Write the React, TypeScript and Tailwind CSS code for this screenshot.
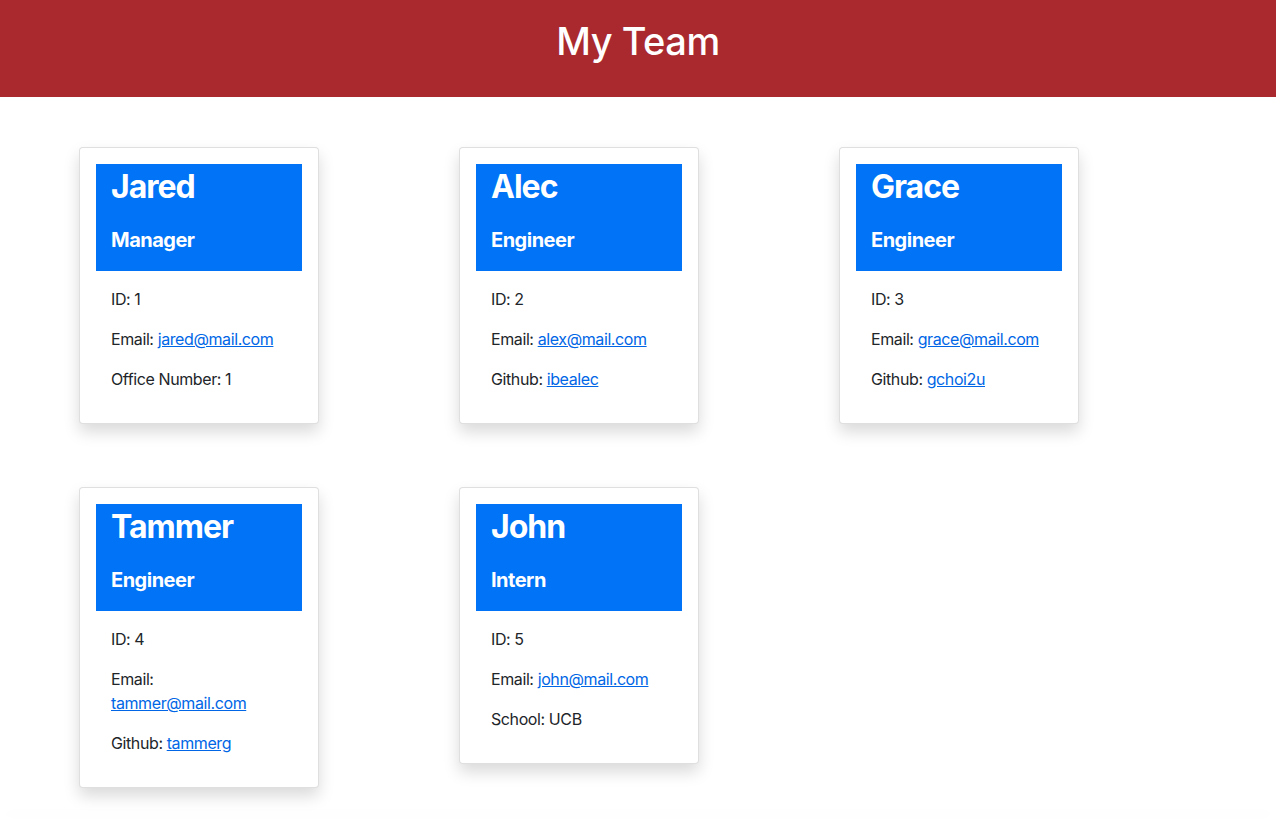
import React from "react";

type Member = {
  name: string;
  role: string;
  id: number;
  email: string;
  extra: { label: string; value: string; link?: boolean };
};

const team: Member[] = [
  { name: "Jared", role: "Manager", id: 1, email: "jared@mail.com", extra: { label: "Office Number", value: "1" } },
  { name: "Alec", role: "Engineer", id: 2, email: "alex@mail.com", extra: { label: "Github", value: "ibealec", link: true } },
  { name: "Grace", role: "Engineer", id: 3, email: "grace@mail.com", extra: { label: "Github", value: "gchoi2u", link: true } },
  { name: "Tammer", role: "Engineer", id: 4, email: "tammer@mail.com", extra: { label: "Github", value: "tammerg", link: true } },
  { name: "John", role: "Intern", id: 5, email: "john@mail.com", extra: { label: "School", value: "UCB" } },
];

function MemberCard({ m }: { m: Member }) {
  return (
    <div className="ml-[11px] w-[240px] self-start rounded-[4px] border border-[rgba(0,0,0,0.125)] bg-white p-4 shadow-[0_8px_16px_rgba(0,0,0,0.15)]">
      <div className="bg-[#0073f7] px-[15px] pb-[19px] pt-[4px] text-white">
        <h2 className="text-[32px] font-bold leading-[38px] tracking-[-1px]">{m.name}</h2>
        <h4 className="mt-[22px] text-[20px] font-bold leading-[24px] tracking-[-0.5px]">{m.role}</h4>
      </div>
      <div className="px-[15px] pt-4 text-[16px] leading-6 tracking-[-0.4px] text-[#212529]">
        <p className="mb-4">ID: {m.id}</p>
        <p className="mb-4">
          Email:{" "}
          <a href="#" className="text-[#0066e6] underline">
            {m.email}
          </a>
        </p>
        <p className="mb-4">
          {m.extra.label}:{" "}
          {m.extra.link ? (
            <a href="#" className="text-[#0066e6] underline">
              {m.extra.value}
            </a>
          ) : (
            m.extra.value
          )}
        </p>
      </div>
    </div>
  );
}

export default function App() {
  return (
    <div className="bg-white font-['Inter','Liberation_Sans',sans-serif]">
      <header className="flex h-[97px] justify-center bg-[#a9292e] pt-[17px]">
        <h1 className="text-[38px] font-medium leading-[48px] tracking-[-0.5px] text-white">My Team</h1>
      </header>
      <main className="mx-auto w-[1140px] pt-[50px]">
        <div className="grid grid-cols-3 gap-y-[63px]">
          {team.map((m) => (
            <MemberCard key={m.id} m={m} />
          ))}
        </div>
      </main>
      <footer className="mt-[31px] h-[2px] bg-white shadow-[0_-6px_14px_rgba(0,0,0,0.04)]" />
    </div>
  );
}
